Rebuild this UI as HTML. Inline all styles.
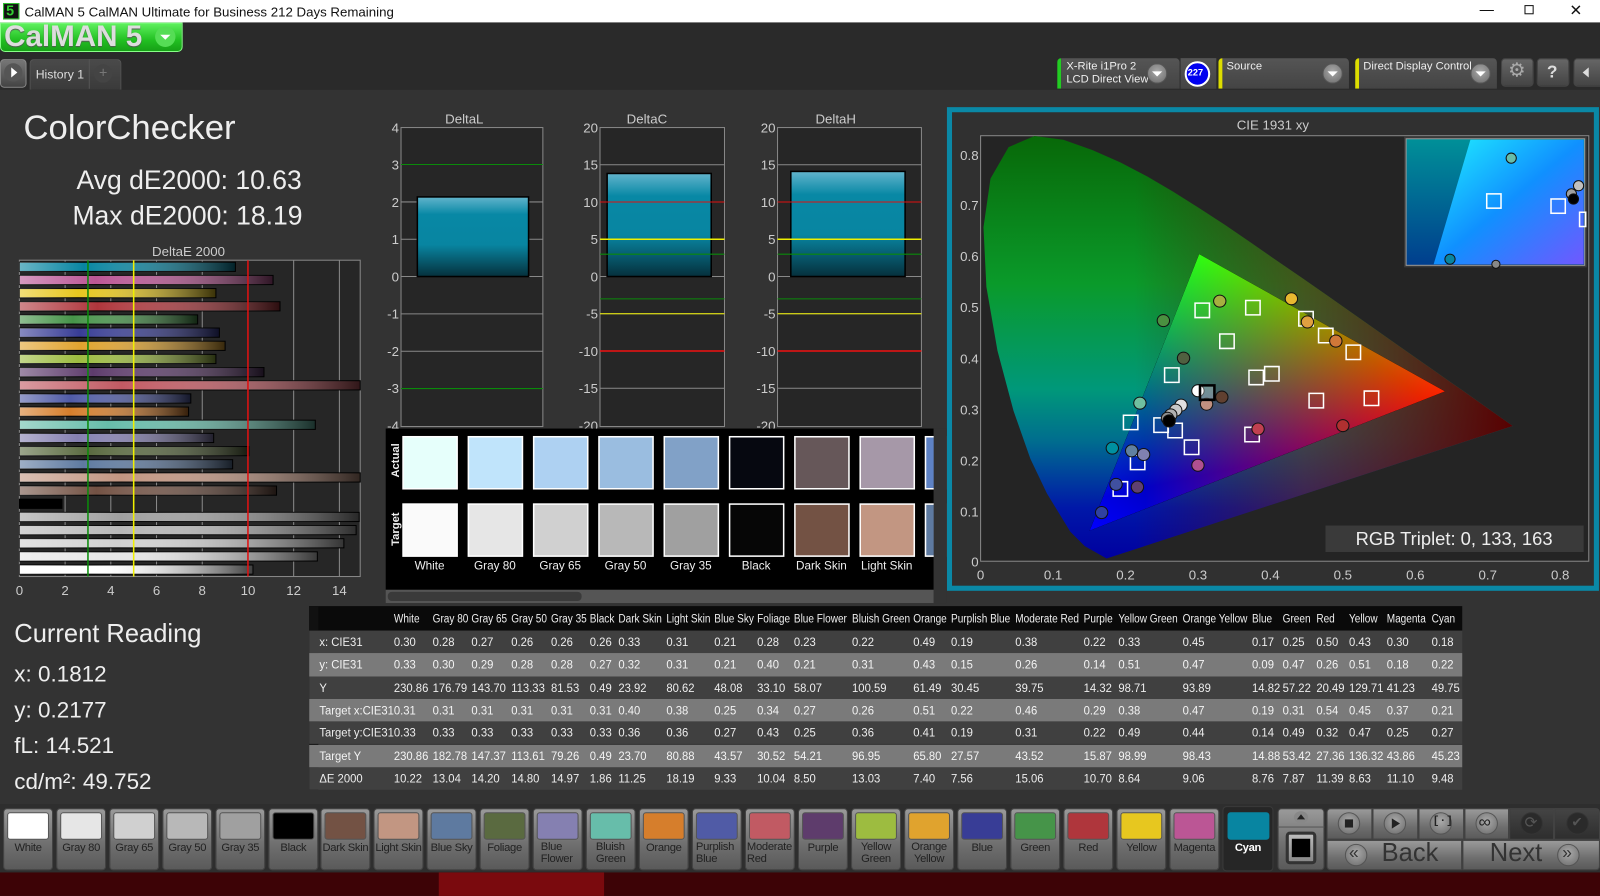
<!DOCTYPE html>
<html><head><meta charset="utf-8">
<style>
*{margin:0;padding:0;box-sizing:border-box}
body{width:1600px;height:878px;overflow:hidden;background:#333;font-family:"Liberation Sans",sans-serif;position:relative;color:#eee}
#w{position:absolute;left:0;top:0;width:1568px;height:861px;transform:scale(1.0204);transform-origin:0 0}
.a{position:absolute}
.t{position:absolute;white-space:nowrap}
.btn{position:absolute;border-radius:4px;background:linear-gradient(#9a9a9a,#6e6e6e 60%,#5a5a5a);border:1px solid #444}
.sw{position:absolute;top:796px;height:27px;border-radius:3px;border:1px solid #555}
.lb{position:absolute;top:824px;font-size:11px;color:#222;text-align:center;line-height:12px;letter-spacing:-0.3px}
.row{position:absolute;left:303px;width:1130px;height:22.3px;font-size:12px;line-height:22px}
.row span{position:absolute;white-space:nowrap;transform:scaleX(.92);transform-origin:0 0}
.row.h span{transform:scaleX(.82)}
.rb{position:absolute;border-radius:50%;background:radial-gradient(circle at 50% 40%,#aaa,#6a6a6a);border:1px solid #555}
</style></head><body><div id="w">
<!-- title bar -->
<div class="a" style="left:0;top:0;width:1600px;height:22px;background:#fff"></div>
<div class="a" style="left:3px;top:3px;width:16px;height:16px;background:#111;border:1px solid #3c3"></div>
<div class="t" style="left:6px;top:2px;font:bold 14px 'Liberation Sans';color:#3c3">5</div>
<div class="t" style="left:24px;top:4px;font-size:13px;color:#111">CalMAN 5 CalMAN Ultimate for Business 212 Days Remaining</div>
<div class="t" style="left:1450px;top:1px;font-size:14px;color:#111">—</div>
<div class="a" style="left:1494px;top:5px;width:9px;height:9px;border:1px solid #111"></div>
<div class="t" style="left:1538px;top:1px;font-size:15px;color:#111">✕</div>
<!-- header rows -->
<div class="a" style="left:0;top:22px;width:1600px;height:66px;background:#2a2a2a"></div>
<div class="a" style="left:0;top:22px;width:179px;height:29px;background:linear-gradient(#5ef05e,#22c022 60%,#17a017);border-radius:0 0 5px 5px;border:1px solid #8f8"></div>
<div class="t" style="left:4px;top:20px;font:bold 29px 'Liberation Sans';color:#ddd;text-shadow:0 1px 1px #555">CalMAN 5</div>
<div class="a" style="left:152px;top:26px;width:20px;height:20px;border-radius:50%;background:#55dd55"></div>
<div class="a" style="left:157px;top:34px;width:0;height:0;border-left:5px solid transparent;border-right:5px solid transparent;border-top:5px solid #fff"></div>
<div class="a" style="left:0;top:58px;width:26px;height:28px;background:linear-gradient(#777,#444);border-radius:4px;border:1px solid #888"></div>
<div class="a" style="left:4px;top:62px;width:18px;height:18px;border-radius:50%;background:#555"></div>
<div class="a" style="left:11px;top:66px;border-top:5px solid transparent;border-bottom:5px solid transparent;border-left:6px solid #fff"></div>
<div class="a" style="left:29px;top:58px;width:90px;height:30px;background:linear-gradient(#4a4a4a,#3a3a3a);border:1px solid #555;border-bottom:none;border-radius:4px 4px 0 0"></div>
<div class="t" style="left:35px;top:66px;font-size:12px;color:#ddd">History 1</div>
<div class="a" style="left:87px;top:58px;width:1px;height:29px;background:#555"></div>
<div class="a" style="left:92px;top:63px;width:18px;height:18px;border-radius:50%;background:#444"></div>
<div class="t" style="left:97px;top:63px;font-size:14px;color:#777">+</div>
<!-- right controls -->
<div class="a" style="left:1036px;top:57px;width:120px;height:30px;background:linear-gradient(#555,#444);border-radius:4px 4px 0 0;border-left:4px solid #2c2"></div>
<div class="t" style="left:1045px;top:59px;font-size:11px;color:#eee;line-height:13px">X-Rite i1Pro 2<br>LCD Direct View</div>
<div class="rb" style="left:1124px;top:62px;width:20px;height:20px"></div>
<div class="a" style="left:1129px;top:70px;border-left:5px solid transparent;border-right:5px solid transparent;border-top:5px solid #fff"></div>
<div class="a" style="left:1156px;top:57px;width:36px;height:30px;background:linear-gradient(#555,#444);border-left:1px solid #333"></div>
<div class="a" style="left:1161px;top:60px;width:25px;height:25px;border-radius:50%;background:#0000f0;border:2px solid #fff"></div>
<div class="t" style="left:1164px;top:66px;font-size:9px;color:#fff;font-weight:bold">227</div>
<div class="a" style="left:1194px;top:57px;width:128px;height:30px;background:linear-gradient(#555,#444);border-radius:4px 4px 0 0;border-left:4px solid #dd0"></div>
<div class="t" style="left:1202px;top:59px;font-size:11px;color:#eee">Source</div>
<div class="rb" style="left:1296px;top:62px;width:20px;height:20px"></div>
<div class="a" style="left:1301px;top:70px;border-left:5px solid transparent;border-right:5px solid transparent;border-top:5px solid #fff"></div>
<div class="a" style="left:1328px;top:57px;width:139px;height:30px;background:linear-gradient(#555,#444);border-radius:4px 4px 0 0;border-left:4px solid #dd0"></div>
<div class="t" style="left:1336px;top:59px;font-size:11px;color:#eee">Direct Display Control</div>
<div class="rb" style="left:1441px;top:62px;width:20px;height:20px"></div>
<div class="a" style="left:1446px;top:70px;border-left:5px solid transparent;border-right:5px solid transparent;border-top:5px solid #fff"></div>
<div class="btn" style="left:1471px;top:57px;width:32px;height:28px;background:linear-gradient(#666,#444)"></div>
<div class="t" style="left:1478px;top:58px;font-size:19px;color:#aaa">⚙</div>
<div class="btn" style="left:1506px;top:57px;width:32px;height:28px;background:linear-gradient(#666,#444)"></div>
<div class="t" style="left:1516px;top:61px;font:bold 17px 'Liberation Sans';color:#ddd">?</div>
<div class="btn" style="left:1542px;top:57px;width:30px;height:28px;background:linear-gradient(#666,#444)"></div>
<div class="a" style="left:1551px;top:66px;border-top:5px solid transparent;border-bottom:5px solid transparent;border-right:6px solid #ddd"></div>

<!-- left texts -->
<div class="t" style="left:23px;top:106px;font-size:34px;color:#eee">ColorChecker</div>
<div class="t" style="left:75px;top:161px;font-size:26px;color:#eee">Avg dE2000: 10.63</div>
<div class="t" style="left:71px;top:196px;font-size:26px;color:#eee">Max dE2000: 18.19</div>
<div class="t" style="left:149px;top:239px;font-size:13px;color:#ccc">DeltaE 2000</div>
<div class="t" style="left:14px;top:607px;font-size:25px;color:#eee">Current Reading</div>
<div class="t" style="left:14px;top:648px;font-size:22px;color:#eee">x: 0.1812</div>
<div class="t" style="left:14px;top:683px;font-size:22px;color:#eee">y: 0.2177</div>
<div class="t" style="left:14px;top:718px;font-size:22px;color:#eee">fL: 14.521</div>
<div class="t" style="left:14px;top:753px;font-size:22px;color:#eee">cd/m²: 49.752</div>

<!-- CIE panel frame -->
<div class="a" style="left:928px;top:105px;width:639px;height:474px;border:5px solid #0a88a6;background:#303030"></div>
<div class="t" style="left:1212px;top:115px;font-size:13px;color:#ccc">CIE 1931 xy</div>

<svg class="a" style="left:0;top:0" width="1600" height="878" viewBox="0 0 1600 878">
<defs>
<linearGradient id="bg" x1="0" y1="0" x2="0" y2="1"><stop offset="0" stop-color="#62b4cc"/><stop offset=".22" stop-color="#0888a5"/><stop offset=".6" stop-color="#0885a1"/><stop offset="1" stop-color="#06303c"/></linearGradient>
<linearGradient id="sh" x1="0" y1="0" x2="1" y2="0"><stop offset="0" stop-color="#fff" stop-opacity=".4"/><stop offset=".3" stop-color="#fff" stop-opacity="0"/><stop offset="1" stop-color="#000" stop-opacity=".75"/></linearGradient>
<linearGradient id="hs" gradientUnits="userSpaceOnUse" x1="0" y1="100" x2="0" y2="1360"><stop offset="0" stop-color="#086808"/><stop offset=".35" stop-color="#0a9a2a"/><stop offset=".6" stop-color="#00987a"/><stop offset=".72" stop-color="#006e8e"/><stop offset=".88" stop-color="#0018a8"/><stop offset="1" stop-color="#0000a0"/></linearGradient>
<linearGradient id="hr" gradientUnits="userSpaceOnUse" x1="500" y1="0" x2="1420" y2="0"><stop offset="0" stop-color="#600000" stop-opacity="0"/><stop offset=".45" stop-color="#702010" stop-opacity=".55"/><stop offset="1" stop-color="#580000" stop-opacity="1"/></linearGradient>
<linearGradient id="gr" gradientUnits="userSpaceOnUse" x1="1255" y1="862" x2="525" y2="865"><stop offset="0" stop-color="#f00"/><stop offset="1" stop-color="#000"/></linearGradient>
<linearGradient id="gg" gradientUnits="userSpaceOnUse" x1="658" y1="453" x2="823" y2="1070"><stop offset="0" stop-color="#0f0"/><stop offset="1" stop-color="#000"/></linearGradient>
<linearGradient id="gb" gradientUnits="userSpaceOnUse" x1="392" y1="1277" x2="956" y2="657"><stop offset="0" stop-color="#00f"/><stop offset="1" stop-color="#000"/></linearGradient>
<linearGradient id="in1" x1="0" y1="0" x2="0" y2="1"><stop offset="0" stop-color="#009098"/><stop offset="1" stop-color="#003e8e"/></linearGradient>
<linearGradient id="in2" x1="0" y1="0" x2="1" y2="1"><stop offset="0" stop-color="#20f0ff"/><stop offset=".5" stop-color="#1090ff"/><stop offset="1" stop-color="#7058ff"/></linearGradient>
</defs>

<!-- DeltaE chart -->
<rect x="19" y="255" width="334" height="310" fill="#262626" stroke="#888"/>
<g stroke="#8a8a8a" stroke-width="1">
<line x1="63.8" y1="255" x2="63.8" y2="565"/><line x1="108.6" y1="255" x2="108.6" y2="565"/><line x1="153.4" y1="255" x2="153.4" y2="565"/><line x1="198.2" y1="255" x2="198.2" y2="565"/><line x1="243" y1="255" x2="243" y2="565"/><line x1="287.8" y1="255" x2="287.8" y2="565"/><line x1="332.6" y1="255" x2="332.6" y2="565"/>
</g>
<g stroke="#000" stroke-width="1">
<rect x="19" y="257" width="211.7" height="9" fill="#0885a1"/>
<rect x="19" y="269.9" width="248.6" height="9" fill="#bb5695"/>
<rect x="19" y="282.8" width="192.6" height="9" fill="#e7c71f"/>
<rect x="19" y="295.7" width="255.4" height="9" fill="#af363c"/>
<rect x="19" y="308.6" width="174.7" height="9" fill="#469449"/>
<rect x="19" y="321.5" width="196" height="9" fill="#383d96"/>
<rect x="19" y="334.4" width="201.6" height="9" fill="#e0a32e"/>
<rect x="19" y="347.3" width="192.6" height="9" fill="#9dbc40"/>
<rect x="19" y="360.2" width="239.7" height="9" fill="#5e3c6c"/>
<rect x="19" y="373.1" width="334" height="9" fill="#c15a63"/>
<rect x="19" y="386" width="168" height="9" fill="#505ba6"/>
<rect x="19" y="398.9" width="165.8" height="9" fill="#d67e2c"/>
<rect x="19" y="411.8" width="290" height="9" fill="#67bdaa"/>
<rect x="19" y="424.7" width="190.4" height="9" fill="#8580b1"/>
<rect x="19" y="437.6" width="224.9" height="9" fill="#5a6a40"/>
<rect x="19" y="450.5" width="209" height="9" fill="#5e7aa0"/>
<rect x="19" y="463.4" width="334" height="9" fill="#c29682"/>
<rect x="19" y="476.3" width="252" height="9" fill="#735244"/>
<rect x="19" y="489.2" width="41.7" height="9" fill="#000"/>
<rect x="19" y="502.1" width="333" height="9" fill="#a0a0a0"/>
<rect x="19" y="515" width="330" height="9" fill="#b8b8b8"/>
<rect x="19" y="527.9" width="318" height="9" fill="#d0d0d0"/>
<rect x="19" y="540.8" width="292" height="9" fill="#e6e6e6"/>
<rect x="19" y="553.7" width="228.9" height="9" fill="#fff"/>
</g>
<g fill="url(#sh)">
<rect x="19" y="257" width="211.7" height="9"/><rect x="19" y="269.9" width="248.6" height="9"/><rect x="19" y="282.8" width="192.6" height="9"/><rect x="19" y="295.7" width="255.4" height="9"/><rect x="19" y="308.6" width="174.7" height="9"/><rect x="19" y="321.5" width="196" height="9"/><rect x="19" y="334.4" width="201.6" height="9"/><rect x="19" y="347.3" width="192.6" height="9"/><rect x="19" y="360.2" width="239.7" height="9"/><rect x="19" y="373.1" width="334" height="9"/><rect x="19" y="386" width="168" height="9"/><rect x="19" y="398.9" width="165.8" height="9"/><rect x="19" y="411.8" width="290" height="9"/><rect x="19" y="424.7" width="190.4" height="9"/><rect x="19" y="437.6" width="224.9" height="9"/><rect x="19" y="450.5" width="209" height="9"/><rect x="19" y="463.4" width="334" height="9"/><rect x="19" y="476.3" width="252" height="9"/><rect x="19" y="502.1" width="333" height="9"/><rect x="19" y="515" width="330" height="9"/><rect x="19" y="527.9" width="318" height="9"/><rect x="19" y="540.8" width="292" height="9"/><rect x="19" y="553.7" width="228.9" height="9"/>
</g>
<line x1="86.2" y1="255" x2="86.2" y2="565" stroke="#0a8a0a" stroke-width="1.5"/>
<line x1="131" y1="255" x2="131" y2="565" stroke="#f0f000" stroke-width="1.5"/>
<line x1="243" y1="255" x2="243" y2="565" stroke="#e01010" stroke-width="1.5"/>
<g font-size="13" fill="#ccc" text-anchor="middle" font-family="Liberation Sans">
<text x="19" y="583">0</text><text x="63.8" y="583">2</text><text x="108.6" y="583">4</text><text x="153.4" y="583">6</text><text x="198.2" y="583">8</text><text x="243" y="583">10</text><text x="287.8" y="583">12</text><text x="332.6" y="583">14</text>
</g>

<!-- Delta charts -->
<g font-family="Liberation Sans" font-size="13" fill="#ccc">
<text x="455" y="121" text-anchor="middle">DeltaL</text>
<text x="634" y="121" text-anchor="middle">DeltaC</text>
<text x="819" y="121" text-anchor="middle">DeltaH</text>
</g>
<rect x="393" y="125" width="139" height="293" fill="#262626" stroke="#888"/>
<rect x="588" y="125" width="122" height="293" fill="#262626" stroke="#888"/>
<rect x="762" y="125" width="141" height="293" fill="#262626" stroke="#888"/>
<g stroke="#888">
<line x1="393" y1="197.9" x2="532" y2="197.9"/><line x1="393" y1="234.5" x2="532" y2="234.5"/><line x1="393" y1="271" x2="532" y2="271"/><line x1="393" y1="307.6" x2="532" y2="307.6"/><line x1="393" y1="344.2" x2="532" y2="344.2"/>
<line x1="588" y1="161.5" x2="710" y2="161.5"/><line x1="588" y1="198" x2="710" y2="198"/><line x1="588" y1="234.5" x2="710" y2="234.5"/><line x1="588" y1="271" x2="710" y2="271"/><line x1="588" y1="307.5" x2="710" y2="307.5"/><line x1="588" y1="344" x2="710" y2="344"/><line x1="588" y1="380.5" x2="710" y2="380.5"/>
<line x1="762" y1="161.5" x2="903" y2="161.5"/><line x1="762" y1="198" x2="903" y2="198"/><line x1="762" y1="234.5" x2="903" y2="234.5"/><line x1="762" y1="271" x2="903" y2="271"/><line x1="762" y1="307.5" x2="903" y2="307.5"/><line x1="762" y1="344" x2="903" y2="344"/><line x1="762" y1="380.5" x2="903" y2="380.5"/>
</g>
<rect x="409" y="193" width="109" height="78" fill="url(#bg)" stroke="#000" stroke-width="1.5"/>
<rect x="595" y="170" width="102" height="101" fill="url(#bg)" stroke="#000" stroke-width="1.5"/>
<rect x="775" y="168" width="112" height="103" fill="url(#bg)" stroke="#000" stroke-width="1.5"/>
<g stroke-width="1">
<line x1="393" y1="161.2" x2="532" y2="161.2" stroke="#0a8a0a"/><line x1="393" y1="380.8" x2="532" y2="380.8" stroke="#0a8a0a"/>
<line x1="588" y1="198" x2="710" y2="198" stroke="#e01010"/><line x1="588" y1="344" x2="710" y2="344" stroke="#f01010" stroke-width="1.5"/>
<line x1="588" y1="234.5" x2="710" y2="234.5" stroke="#f0f000" stroke-width="1.5"/><line x1="588" y1="307.5" x2="710" y2="307.5" stroke="#f0f000"/>
<line x1="588" y1="249.1" x2="710" y2="249.1" stroke="#0a8a0a"/><line x1="588" y1="292.9" x2="710" y2="292.9" stroke="#0a8a0a"/>
<line x1="762" y1="198" x2="903" y2="198" stroke="#e01010"/><line x1="762" y1="344" x2="903" y2="344" stroke="#f01010" stroke-width="1.5"/>
<line x1="762" y1="234.5" x2="903" y2="234.5" stroke="#f0f000" stroke-width="1.5"/><line x1="762" y1="307.5" x2="903" y2="307.5" stroke="#f0f000"/>
<line x1="762" y1="249.1" x2="903" y2="249.1" stroke="#0a8a0a"/><line x1="762" y1="292.9" x2="903" y2="292.9" stroke="#0a8a0a"/>
</g>
<g font-family="Liberation Sans" font-size="13" fill="#ccc" text-anchor="end">
<text x="391" y="130">4</text><text x="391" y="166">3</text><text x="391" y="203">2</text><text x="391" y="239">1</text><text x="391" y="276">0</text><text x="391" y="312">-1</text><text x="391" y="349">-2</text><text x="391" y="385">-3</text><text x="391" y="422">-4</text>
<text x="586" y="130">20</text><text x="586" y="166">15</text><text x="586" y="203">10</text><text x="586" y="239">5</text><text x="586" y="276">0</text><text x="586" y="312">-5</text><text x="586" y="349">-10</text><text x="586" y="385">-15</text><text x="586" y="422">-20</text>
<text x="760" y="130">20</text><text x="760" y="166">15</text><text x="760" y="203">10</text><text x="760" y="239">5</text><text x="760" y="276">0</text><text x="760" y="312">-5</text><text x="760" y="349">-10</text><text x="760" y="385">-15</text><text x="760" y="422">-20</text>
</g>

<!-- swatch panel -->
<rect x="378" y="420" width="537" height="158" fill="#000"/>
<rect x="378" y="578" width="537" height="13" fill="#555"/>
<rect x="380" y="580" width="190" height="9" rx="4" fill="#3a3a3a"/>
<text transform="translate(391,468) rotate(-90)" font-family="Liberation Sans" font-size="11" font-weight="bold" fill="#eee">Actual</text>
<text transform="translate(391,535) rotate(-90)" font-family="Liberation Sans" font-size="11" font-weight="bold" fill="#eee">Target</text>
<g stroke="#fff" stroke-width="1.5">
<rect x="395" y="428" width="53" height="51" fill="#e6fffb"/><rect x="459" y="428" width="53" height="51" fill="#c0e4fb"/><rect x="523" y="428" width="53" height="51" fill="#aed1f2"/><rect x="587" y="428" width="53" height="51" fill="#9abde0"/><rect x="651" y="428" width="53" height="51" fill="#81a1c7"/><rect x="715" y="428" width="53" height="51" fill="#060810"/><rect x="779" y="428" width="53" height="51" fill="#665759"/><rect x="843" y="428" width="53" height="51" fill="#a698a8"/><rect x="907" y="428" width="20" height="51" fill="#5e82c4"/>
<rect x="395" y="494" width="53" height="51" fill="#fafafa"/><rect x="459" y="494" width="53" height="51" fill="#e6e6e6"/><rect x="523" y="494" width="53" height="51" fill="#d0d0d0"/><rect x="587" y="494" width="53" height="51" fill="#b8b8b8"/><rect x="651" y="494" width="53" height="51" fill="#a0a0a0"/><rect x="715" y="494" width="53" height="51" fill="#060606"/><rect x="779" y="494" width="53" height="51" fill="#735244"/><rect x="843" y="494" width="53" height="51" fill="#c29682"/><rect x="907" y="494" width="20" height="51" fill="#5e7aa0"/>
</g>
<rect x="915" y="420" width="13" height="171" fill="#333"/>
<g font-family="Liberation Sans" font-size="11.5" fill="#eee" text-anchor="middle">
<text x="421" y="558">White</text><text x="485" y="558">Gray 80</text><text x="549" y="558">Gray 65</text><text x="613" y="558">Gray 50</text><text x="677" y="558">Gray 35</text><text x="741" y="558">Black</text><text x="805" y="558">Dark Skin</text><text x="869" y="558">Light Skin</text>
</g>

<!-- CIE chart -->
<rect x="961" y="133" width="596" height="417" fill="#242424" stroke="#888"/>
<g transform="matrix(0.4034 0 0 0.3289 909.77 100.07)">
<path d="M433,1360 L380,1323 345,1280 288,1166 248,1063 207,920 168,741 141,550 134,373 151,228 195,134 258,101 328,112 399,143 467,180 531,221 595,267 658,316 721,366 784,419 846,472 909,525 970,577 1029,628 1086,677 1139,723 1188,765 1231,802 1268,834 1299,860 1344,899 1420,965 Z" fill="url(#hs)"/>
<path d="M433,1360 L380,1323 345,1280 288,1166 248,1063 207,920 168,741 141,550 134,373 151,228 195,134 258,101 328,112 399,143 467,180 531,221 595,267 658,316 721,366 784,419 846,472 909,525 970,577 1029,628 1086,677 1139,723 1188,765 1231,802 1268,834 1299,860 1344,899 1420,965 Z" fill="url(#hr)"/>
<g style="isolation:isolate">
<polygon points="658,453 1255,862 392,1277" fill="#000"/>
<polygon points="658,453 1255,862 392,1277" fill="url(#gr)" style="mix-blend-mode:screen"/>
<polygon points="658,453 1255,862 392,1277" fill="url(#gg)" style="mix-blend-mode:screen"/>
<polygon points="658,453 1255,862 392,1277" fill="url(#gb)" style="mix-blend-mode:screen"/>
</g>
<g fill="none" stroke="#fff" stroke-width="1.5">
<rect x="648" y="599" width="35" height="43" vector-effect="non-scaling-stroke"/><rect x="771" y="591" width="35" height="43" vector-effect="non-scaling-stroke"/><rect x="900" y="624" width="35" height="43" vector-effect="non-scaling-stroke"/><rect x="948" y="674" width="35" height="43" vector-effect="non-scaling-stroke"/><rect x="708" y="691" width="35" height="43" vector-effect="non-scaling-stroke"/><rect x="1015" y="724" width="35" height="43" vector-effect="non-scaling-stroke"/><rect x="574" y="792" width="35" height="43" vector-effect="non-scaling-stroke"/><rect x="817" y="788" width="35" height="43" vector-effect="non-scaling-stroke"/><rect x="779" y="799" width="35" height="43" vector-effect="non-scaling-stroke"/><rect x="925" y="868" width="35" height="43" vector-effect="non-scaling-stroke"/><rect x="1059" y="861" width="35" height="43" vector-effect="non-scaling-stroke"/><rect x="474" y="933" width="35" height="43" vector-effect="non-scaling-stroke"/><rect x="548" y="941" width="35" height="43" vector-effect="non-scaling-stroke"/><rect x="582" y="957" width="35" height="43" vector-effect="non-scaling-stroke"/><rect x="769" y="969" width="35" height="43" vector-effect="non-scaling-stroke"/><rect x="622" y="1007" width="35" height="43" vector-effect="non-scaling-stroke"/><rect x="491" y="1052" width="35" height="43" vector-effect="non-scaling-stroke"/><rect x="449" y="1131" width="35" height="43" vector-effect="non-scaling-stroke"/>
</g>
<g stroke="#111" stroke-width="1">
<ellipse cx="708" cy="593" rx="15" ry="18" fill="#a5b040" vector-effect="non-scaling-stroke"/><ellipse cx="882" cy="586" rx="15" ry="18" fill="#e8b830" vector-effect="non-scaling-stroke"/><ellipse cx="571" cy="651" rx="15" ry="18" fill="#4a9040" vector-effect="non-scaling-stroke"/><ellipse cx="921" cy="655" rx="15" ry="18" fill="#e0a040" vector-effect="non-scaling-stroke"/><ellipse cx="990" cy="712" rx="15" ry="18" fill="#d07838" vector-effect="non-scaling-stroke"/><ellipse cx="620" cy="763" rx="15" ry="18" fill="#506040" vector-effect="non-scaling-stroke"/><ellipse cx="713" cy="879" rx="15" ry="18" fill="#604030" vector-effect="non-scaling-stroke"/><ellipse cx="514" cy="897" rx="15" ry="18" fill="#70c0a0" vector-effect="non-scaling-stroke"/><ellipse cx="676" cy="900" rx="15" ry="18" fill="#c09080" vector-effect="non-scaling-stroke"/><ellipse cx="614" cy="903" rx="15" ry="18" fill="#e0e0e0" vector-effect="non-scaling-stroke"/><ellipse cx="601" cy="918" rx="15" ry="18" fill="#c8c8c8" vector-effect="non-scaling-stroke"/><ellipse cx="589" cy="932" rx="15" ry="18" fill="#b0b0b0" vector-effect="non-scaling-stroke"/><ellipse cx="581" cy="942" rx="15" ry="18" fill="#909090" vector-effect="non-scaling-stroke"/><ellipse cx="585" cy="950" rx="15" ry="18" fill="#000" vector-effect="non-scaling-stroke"/><ellipse cx="1007" cy="964" rx="15" ry="18" fill="#b03030" vector-effect="non-scaling-stroke"/><ellipse cx="801" cy="974" rx="15" ry="18" fill="#c04050" vector-effect="non-scaling-stroke"/><ellipse cx="447" cy="1031" rx="15" ry="18" fill="#0090a0" vector-effect="non-scaling-stroke"/><ellipse cx="494" cy="1039" rx="15" ry="18" fill="#6080a0" vector-effect="non-scaling-stroke"/><ellipse cx="523" cy="1050" rx="15" ry="18" fill="#8080b0" vector-effect="non-scaling-stroke"/><ellipse cx="655" cy="1082" rx="15" ry="18" fill="#b05090" vector-effect="non-scaling-stroke"/><ellipse cx="456" cy="1139" rx="15" ry="18" fill="#4050a0" vector-effect="non-scaling-stroke"/><ellipse cx="508" cy="1147" rx="15" ry="18" fill="#604070" vector-effect="non-scaling-stroke"/><ellipse cx="421" cy="1223" rx="15" ry="18" fill="#3040a0" vector-effect="non-scaling-stroke"/>
<ellipse cx="655" cy="860" rx="15" ry="18" fill="#fff" vector-effect="non-scaling-stroke"/>
</g>
<rect x="660" y="844" width="35" height="43" fill="#fff" fill-opacity=".3" stroke="#000" stroke-width="2.5" vector-effect="non-scaling-stroke"/>
</g>
<!-- inset -->
<rect x="1376" y="134" width="179" height="128" fill="#3a3a3a"/>
<rect x="1378" y="136" width="175" height="124" fill="url(#in1)" stroke="#999"/>
<polygon points="1441,137 1552,137 1552,259 1405,259" fill="url(#in2)"/>
<g stroke="#111"><circle cx="1481" cy="155" r="5" fill="#67bdaa"/><circle cx="1421" cy="254" r="5" fill="#0885a1"/><circle cx="1466" cy="259" r="4" fill="#888"/><circle cx="1547" cy="182" r="5" fill="#c0c0c0"/><circle cx="1540" cy="190" r="5" fill="#a0a0a0"/><circle cx="1542" cy="195" r="5" fill="#000"/></g>
<g fill="none" stroke="#fff" stroke-width="1.5"><rect x="1457" y="190" width="14" height="14"/><rect x="1520" y="195" width="14" height="14"/><rect x="1548" y="208" width="6" height="14"/></g>
<rect x="1299" y="515" width="253" height="26" fill="#3a3a3a"/>
<text x="1425" y="534" font-family="Liberation Sans" font-size="18" fill="#eee" text-anchor="middle">RGB Triplet: 0, 133, 163</text>
<g font-family="Liberation Sans" font-size="13" fill="#ccc">
<g text-anchor="end"><text x="959" y="157">0.8</text><text x="959" y="206">0.7</text><text x="959" y="256">0.6</text><text x="959" y="306">0.5</text><text x="959" y="356">0.4</text><text x="959" y="406">0.3</text><text x="959" y="456">0.2</text><text x="959" y="506">0.1</text><text x="959" y="555">0</text></g>
<g text-anchor="middle"><text x="961" y="568">0</text><text x="1032" y="568">0.1</text><text x="1103" y="568">0.2</text><text x="1174" y="568">0.3</text><text x="1245" y="568">0.4</text><text x="1316" y="568">0.5</text><text x="1387" y="568">0.6</text><text x="1458" y="568">0.7</text><text x="1529" y="568">0.8</text></g>
</g>
</svg>

<!-- table -->
<div class="a" style="left:303px;top:594px;width:1130px;height:24px;background:#0a0a0a"></div>
<div class="a" style="left:303px;top:594px;width:9px;height:180px;background:#111"></div>
<div class="row h" style="top:595px;color:#eee;background:transparent"><span style="left:83px">White</span><span style="left:121px">Gray 80</span><span style="left:159px">Gray 65</span><span style="left:198px">Gray 50</span><span style="left:237px">Gray 35</span><span style="left:275px">Black</span><span style="left:303px">Dark Skin</span><span style="left:350px">Light Skin</span><span style="left:397px">Blue Sky</span><span style="left:439px">Foliage</span><span style="left:475px">Blue Flower</span><span style="left:532px">Bluish Green</span><span style="left:592px">Orange</span><span style="left:629px">Purplish Blue</span><span style="left:692px">Moderate Red</span><span style="left:759px">Purple</span><span style="left:793px">Yellow Green</span><span style="left:856px">Orange Yellow</span><span style="left:924px">Blue</span><span style="left:954px">Green</span><span style="left:987px">Red</span><span style="left:1019px">Yellow</span><span style="left:1056px">Magenta</span><span style="left:1100px">Cyan</span></div>
<div class="row" style="top:618px;background:#404040;color:#eee"><span style="left:10px">x: CIE31</span><span style="left:83px">0.30</span><span style="left:121px">0.28</span><span style="left:159px">0.27</span><span style="left:198px">0.26</span><span style="left:237px">0.26</span><span style="left:275px">0.26</span><span style="left:303px">0.33</span><span style="left:350px">0.31</span><span style="left:397px">0.21</span><span style="left:439px">0.28</span><span style="left:475px">0.23</span><span style="left:532px">0.22</span><span style="left:592px">0.49</span><span style="left:629px">0.19</span><span style="left:692px">0.38</span><span style="left:759px">0.22</span><span style="left:793px">0.33</span><span style="left:856px">0.45</span><span style="left:924px">0.17</span><span style="left:954px">0.25</span><span style="left:987px">0.50</span><span style="left:1019px">0.43</span><span style="left:1056px">0.30</span><span style="left:1100px">0.18</span></div>
<div class="row" style="top:640.3px;background:#7a7a7a;color:#f4f4f4"><span style="left:10px">y: CIE31</span><span style="left:83px">0.33</span><span style="left:121px">0.30</span><span style="left:159px">0.29</span><span style="left:198px">0.28</span><span style="left:237px">0.28</span><span style="left:275px">0.27</span><span style="left:303px">0.32</span><span style="left:350px">0.31</span><span style="left:397px">0.21</span><span style="left:439px">0.40</span><span style="left:475px">0.21</span><span style="left:532px">0.31</span><span style="left:592px">0.43</span><span style="left:629px">0.15</span><span style="left:692px">0.26</span><span style="left:759px">0.14</span><span style="left:793px">0.51</span><span style="left:856px">0.47</span><span style="left:924px">0.09</span><span style="left:954px">0.47</span><span style="left:987px">0.26</span><span style="left:1019px">0.51</span><span style="left:1056px">0.18</span><span style="left:1100px">0.22</span></div>
<div class="row" style="top:662.6px;background:#404040;color:#eee"><span style="left:10px">Y</span><span style="left:83px">230.86</span><span style="left:121px">176.79</span><span style="left:159px">143.70</span><span style="left:198px">113.33</span><span style="left:237px">81.53</span><span style="left:275px">0.49</span><span style="left:303px">23.92</span><span style="left:350px">80.62</span><span style="left:397px">48.08</span><span style="left:439px">33.10</span><span style="left:475px">58.07</span><span style="left:532px">100.59</span><span style="left:592px">61.49</span><span style="left:629px">30.45</span><span style="left:692px">39.75</span><span style="left:759px">14.32</span><span style="left:793px">98.71</span><span style="left:856px">93.89</span><span style="left:924px">14.82</span><span style="left:954px">57.22</span><span style="left:987px">20.49</span><span style="left:1019px">129.71</span><span style="left:1056px">41.23</span><span style="left:1100px">49.75</span></div>
<div class="row" style="top:684.9px;background:#7a7a7a;color:#f4f4f4"><span style="left:10px">Target x:CIE31</span><span style="left:83px">0.31</span><span style="left:121px">0.31</span><span style="left:159px">0.31</span><span style="left:198px">0.31</span><span style="left:237px">0.31</span><span style="left:275px">0.31</span><span style="left:303px">0.40</span><span style="left:350px">0.38</span><span style="left:397px">0.25</span><span style="left:439px">0.34</span><span style="left:475px">0.27</span><span style="left:532px">0.26</span><span style="left:592px">0.51</span><span style="left:629px">0.22</span><span style="left:692px">0.46</span><span style="left:759px">0.29</span><span style="left:793px">0.38</span><span style="left:856px">0.47</span><span style="left:924px">0.19</span><span style="left:954px">0.31</span><span style="left:987px">0.54</span><span style="left:1019px">0.45</span><span style="left:1056px">0.37</span><span style="left:1100px">0.21</span></div>
<div class="row" style="top:707.2px;background:#404040;color:#eee"><span style="left:10px">Target y:CIE31</span><span style="left:83px">0.33</span><span style="left:121px">0.33</span><span style="left:159px">0.33</span><span style="left:198px">0.33</span><span style="left:237px">0.33</span><span style="left:275px">0.33</span><span style="left:303px">0.36</span><span style="left:350px">0.36</span><span style="left:397px">0.27</span><span style="left:439px">0.43</span><span style="left:475px">0.25</span><span style="left:532px">0.36</span><span style="left:592px">0.41</span><span style="left:629px">0.19</span><span style="left:692px">0.31</span><span style="left:759px">0.22</span><span style="left:793px">0.49</span><span style="left:856px">0.44</span><span style="left:924px">0.14</span><span style="left:954px">0.49</span><span style="left:987px">0.32</span><span style="left:1019px">0.47</span><span style="left:1056px">0.25</span><span style="left:1100px">0.27</span></div>
<div class="row" style="top:729.5px;background:#7a7a7a;color:#f4f4f4"><span style="left:10px">Target Y</span><span style="left:83px">230.86</span><span style="left:121px">182.78</span><span style="left:159px">147.37</span><span style="left:198px">113.61</span><span style="left:237px">79.26</span><span style="left:275px">0.49</span><span style="left:303px">23.70</span><span style="left:350px">80.88</span><span style="left:397px">43.57</span><span style="left:439px">30.52</span><span style="left:475px">54.21</span><span style="left:532px">96.95</span><span style="left:592px">65.80</span><span style="left:629px">27.57</span><span style="left:692px">43.52</span><span style="left:759px">15.87</span><span style="left:793px">98.99</span><span style="left:856px">98.43</span><span style="left:924px">14.88</span><span style="left:954px">53.42</span><span style="left:987px">27.36</span><span style="left:1019px">136.32</span><span style="left:1056px">43.86</span><span style="left:1100px">45.23</span></div>
<div class="row" style="top:751.8px;background:#404040;color:#eee"><span style="left:10px">ΔE 2000</span><span style="left:83px">10.22</span><span style="left:121px">13.04</span><span style="left:159px">14.20</span><span style="left:198px">14.80</span><span style="left:237px">14.97</span><span style="left:275px">1.86</span><span style="left:303px">11.25</span><span style="left:350px">18.19</span><span style="left:397px">9.33</span><span style="left:439px">10.04</span><span style="left:475px">8.50</span><span style="left:532px">13.03</span><span style="left:592px">7.40</span><span style="left:629px">7.56</span><span style="left:692px">15.06</span><span style="left:759px">10.70</span><span style="left:793px">8.64</span><span style="left:856px">9.06</span><span style="left:924px">8.76</span><span style="left:954px">7.87</span><span style="left:987px">11.39</span><span style="left:1019px">8.63</span><span style="left:1056px">11.10</span><span style="left:1100px">9.48</span></div>

<!-- bottom swatch buttons -->
<div class="a" style="left:0;top:788px;width:1600px;height:67px;background:#2e2e2e"></div>
<div class="btn" style="left:3px;top:792px;width:49px;height:61px"></div><div class="sw" style="left:7px;width:41px;background:#fff"></div><div class="lb" style="left:3px;width:49px;top:825px">White</div>
<div class="btn" style="left:55px;top:792px;width:49px;height:61px"></div><div class="sw" style="left:59px;width:41px;background:#e6e6e6"></div><div class="lb" style="left:55px;width:49px;top:825px">Gray 80</div>
<div class="btn" style="left:107px;top:792px;width:49px;height:61px"></div><div class="sw" style="left:111px;width:41px;background:#d0d0d0"></div><div class="lb" style="left:107px;width:49px;top:825px">Gray 65</div>
<div class="btn" style="left:159px;top:792px;width:49px;height:61px"></div><div class="sw" style="left:163px;width:41px;background:#b8b8b8"></div><div class="lb" style="left:159px;width:49px;top:825px">Gray 50</div>
<div class="btn" style="left:211px;top:792px;width:49px;height:61px"></div><div class="sw" style="left:215px;width:41px;background:#a0a0a0"></div><div class="lb" style="left:211px;width:49px;top:825px">Gray 35</div>
<div class="btn" style="left:263px;top:792px;width:49px;height:61px"></div><div class="sw" style="left:267px;width:41px;background:#000"></div><div class="lb" style="left:263px;width:49px;top:825px">Black</div>
<div class="btn" style="left:314px;top:792px;width:49px;height:61px"></div><div class="sw" style="left:318px;width:41px;background:#735244"></div><div class="lb" style="left:311px;width:55px;top:825px">Dark Skin</div>
<div class="btn" style="left:366px;top:792px;width:49px;height:61px"></div><div class="sw" style="left:370px;width:41px;background:#c29682"></div><div class="lb" style="left:363px;width:55px;top:825px">Light Skin</div>
<div class="btn" style="left:418px;top:792px;width:49px;height:61px"></div><div class="sw" style="left:422px;width:41px;background:#5e7aa0"></div><div class="lb" style="left:418px;width:49px;top:825px">Blue Sky</div>
<div class="btn" style="left:470px;top:792px;width:49px;height:61px"></div><div class="sw" style="left:474px;width:41px;background:#5a6a40"></div><div class="lb" style="left:470px;width:49px;top:825px">Foliage</div>
<div class="btn" style="left:522px;top:792px;width:49px;height:61px"></div><div class="sw" style="left:526px;width:41px;background:#8580b1"></div><div class="lb" style="left:530px;text-align:left">Blue<br>Flower</div>
<div class="btn" style="left:574px;top:792px;width:49px;height:61px"></div><div class="sw" style="left:578px;width:41px;background:#67bdaa"></div><div class="lb" style="left:584px;text-align:left">Bluish<br>Green</div>
<div class="btn" style="left:626px;top:792px;width:49px;height:61px"></div><div class="sw" style="left:630px;width:41px;background:#d67e2c"></div><div class="lb" style="left:626px;width:49px;top:825px">Orange</div>
<div class="btn" style="left:678px;top:792px;width:49px;height:61px"></div><div class="sw" style="left:682px;width:41px;background:#505ba6"></div><div class="lb" style="left:682px;text-align:left">Purplish<br>Blue</div>
<div class="btn" style="left:730px;top:792px;width:49px;height:61px"></div><div class="sw" style="left:734px;width:41px;background:#c15a63"></div><div class="lb" style="left:732px;text-align:left">Moderate<br>Red</div>
<div class="btn" style="left:782px;top:792px;width:49px;height:61px"></div><div class="sw" style="left:786px;width:41px;background:#5e3c6c"></div><div class="lb" style="left:782px;width:49px;top:825px">Purple</div>
<div class="btn" style="left:834px;top:792px;width:49px;height:61px"></div><div class="sw" style="left:838px;width:41px;background:#9dbc40"></div><div class="lb" style="left:834px;width:49px">Yellow<br>Green</div>
<div class="btn" style="left:886px;top:792px;width:49px;height:61px"></div><div class="sw" style="left:890px;width:41px;background:#e0a32e"></div><div class="lb" style="left:886px;width:49px">Orange<br>Yellow</div>
<div class="btn" style="left:938px;top:792px;width:49px;height:61px"></div><div class="sw" style="left:942px;width:41px;background:#383d96"></div><div class="lb" style="left:938px;width:49px;top:825px">Blue</div>
<div class="btn" style="left:990px;top:792px;width:49px;height:61px"></div><div class="sw" style="left:994px;width:41px;background:#469449"></div><div class="lb" style="left:990px;width:49px;top:825px">Green</div>
<div class="btn" style="left:1042px;top:792px;width:49px;height:61px"></div><div class="sw" style="left:1046px;width:41px;background:#af363c"></div><div class="lb" style="left:1042px;width:49px;top:825px">Red</div>
<div class="btn" style="left:1094px;top:792px;width:49px;height:61px"></div><div class="sw" style="left:1098px;width:41px;background:#e7c71f"></div><div class="lb" style="left:1094px;width:49px;top:825px">Yellow</div>
<div class="btn" style="left:1146px;top:792px;width:49px;height:61px"></div><div class="sw" style="left:1150px;width:41px;background:#bb5695"></div><div class="lb" style="left:1146px;width:49px;top:825px">Magenta</div>
<div class="btn" style="left:1198px;top:790px;width:50px;height:64px;background:#262626;border-color:#3a3a3a"></div><div class="sw" style="left:1203px;width:41px;background:#0885a1;border-color:#0885a1"></div><div class="lb" style="left:1198px;width:50px;top:825px;color:#fff;font-weight:bold">Cyan</div>

<!-- controls -->
<div class="btn" style="left:1252px;top:792px;width:46px;height:61px"></div>
<div class="a" style="left:1252px;top:810px;width:46px;height:1px;background:#555"></div>
<div class="a" style="left:1268px;top:795px;width:14px;height:12px;border-radius:50%;background:#888"></div>
<div class="a" style="left:1271px;top:798px;border-left:4px solid transparent;border-right:4px solid transparent;border-bottom:5px solid #222"></div>
<div class="a" style="left:1260px;top:815px;width:30px;height:32px;border:3px solid #333;border-radius:4px;background:linear-gradient(#bbb,#888)"></div>
<div class="a" style="left:1266px;top:822px;width:18px;height:18px;background:#000"></div>
<div class="btn" style="left:1300px;top:792px;width:45px;height:31px;border-radius:4px 0 0 0"></div>
<div class="btn" style="left:1345px;top:792px;width:45px;height:31px;border-radius:0"></div>
<div class="btn" style="left:1390px;top:792px;width:45px;height:31px;border-radius:0"></div>
<div class="btn" style="left:1435px;top:792px;width:44px;height:31px;border-radius:0"></div>
<div class="btn" style="left:1479px;top:792px;width:44px;height:31px;border-radius:0;background:linear-gradient(#444,#2e2e2e)"></div>
<div class="btn" style="left:1523px;top:792px;width:45px;height:31px;border-radius:0 4px 0 0;background:linear-gradient(#444,#2e2e2e)"></div>
<div class="rb" style="left:1311px;top:796px;width:22px;height:22px"></div><div class="a" style="left:1318px;top:803px;width:8px;height:8px;background:#222"></div>
<div class="rb" style="left:1356px;top:796px;width:22px;height:22px"></div><div class="a" style="left:1364px;top:802px;border-top:5px solid transparent;border-bottom:5px solid transparent;border-left:8px solid #222"></div>
<div class="rb" style="left:1401px;top:796px;width:22px;height:22px"></div><div class="t" style="left:1404px;top:799px;font:bold 11px 'Liberation Mono';color:#222">[·]</div>
<div class="rb" style="left:1446px;top:796px;width:22px;height:22px"></div><div class="t" style="left:1449px;top:796px;font-size:17px;color:#222">∞</div>
<div class="rb" style="left:1490px;top:796px;width:22px;height:22px;background:#2a2a2a;border-color:#333"></div><div class="t" style="left:1494px;top:797px;font-size:15px;color:#555">⟳</div>
<div class="rb" style="left:1535px;top:796px;width:22px;height:22px;background:#2a2a2a;border-color:#333"></div><div class="t" style="left:1540px;top:798px;font-size:13px;color:#555">✔</div>
<div class="btn" style="left:1300px;top:823px;width:133px;height:30px;border-radius:0 0 0 4px"></div>
<div class="btn" style="left:1433px;top:823px;width:135px;height:30px;border-radius:0 0 4px 0"></div>
<div class="rb" style="left:1318px;top:827px;width:22px;height:22px"></div><div class="t" style="left:1322px;top:826px;font-size:17px;color:#333">«</div>
<div class="t" style="left:1354px;top:822px;font-size:25px;color:#333">Back</div>
<div class="t" style="left:1460px;top:822px;font-size:25px;color:#333">Next</div>
<div class="rb" style="left:1526px;top:827px;width:22px;height:22px"></div><div class="t" style="left:1531px;top:826px;font-size:17px;color:#333">»</div>
<!-- bottom strip -->
<div class="a" style="left:0;top:855px;width:1600px;height:23px;background:#3d0306"></div>
<div class="a" style="left:430px;top:855px;width:162px;height:23px;background:#7a0a0e"></div>
</div></body></html>
